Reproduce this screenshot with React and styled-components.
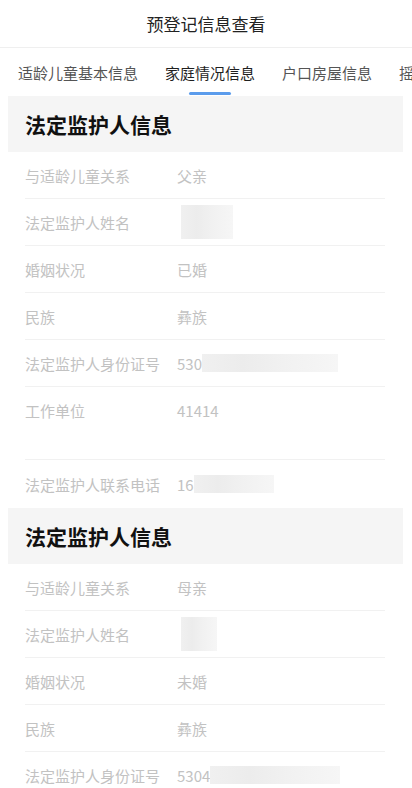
import styled, { createGlobalStyle } from "styled-components"

const GlobalStyle = createGlobalStyle`
  body {
    margin: 0;
    background: #fff;
    font-family: "Noto Sans CJK SC", "Noto Sans", sans-serif;
  }
`

const Page = styled.div`
  width: 412px;
  height: 788px;
  overflow: hidden;
  background: #fff;
`

const TopBar = styled.div`
  display: flex;
  align-items: center;
  justify-content: center;
  height: 47px;
  border-bottom: 1px solid #efefef;
  font-size: 17px;
  color: #222;
`

const Tabs = styled.div`
  display: flex;
  gap: 27px;
  height: 48px;
  padding-left: 18px;
  white-space: nowrap;
  overflow: hidden;
`

const Tab = styled.div`
  position: relative;
  display: flex;
  align-items: center;
  flex-shrink: 0;
  font-size: 15px;
  color: ${(p) => (p.$active ? "#1f1f1f" : "#555")};

  &::after {
    content: "";
    display: ${(p) => (p.$active ? "block" : "none")};
    position: absolute;
    left: 50%;
    bottom: 1px;
    width: 42px;
    height: 3px;
    margin-left: -21px;
    border-radius: 2px;
    background: #5b9cec;
  }
`

const Content = styled.div`
  margin: 0 9px 0 8px;
`

const SectionTitle = styled.div`
  display: flex;
  align-items: center;
  height: 56px;
  padding-left: 17px;
  background: #f5f5f5;
  font-size: 21px;
  font-weight: 700;
  color: #111;
`

const Rows = styled.div`
  padding: 0 18px 0 17px;
`

const Row = styled.div`
  display: flex;
  align-items: ${(p) => (p.$tall ? "flex-start" : "center")};
  height: ${(p) => (p.$tall ? "72px" : "46px")};
  padding-top: ${(p) => (p.$tall ? "13px" : "0")};
  box-sizing: border-box;
  border-bottom: ${(p) => (p.$last ? "none" : "1px solid #f1f1f1")};
  font-size: 15px;
  line-height: 21px;
  color: #c2c2c2;
  height: ${(p) => (p.$tall ? "73px" : p.$last ? "48px" : "47px")};
`

const Label = styled.span`
  width: 152px;
  flex-shrink: 0;
`

const Value = styled.span`
  display: flex;
  align-items: center;
`

const Redact = styled.span`
  display: inline-block;
  width: ${(p) => p.$w}px;
  height: ${(p) => p.$h || 18}px;
  margin-left: ${(p) => p.$ml || 0}px;
  background: linear-gradient(90deg, #f0f0f0 0%, #ececec 30%, #f1f1f1 60%, #f6f6f6 100%);
`

const father = [
  { label: "与适龄儿童关系", value: "父亲" },
  { label: "法定监护人姓名", redact: { w: 52, h: 34, ml: 4 } },
  { label: "婚姻状况", value: "已婚" },
  { label: "民族", value: "彝族" },
  { label: "法定监护人身份证号", value: "530", redact: { w: 136 } },
  { label: "工作单位", value: "41414", tall: true },
  { label: "法定监护人联系电话", value: "16", redact: { w: 80 }, last: true },
]

const mother = [
  { label: "与适龄儿童关系", value: "母亲" },
  { label: "法定监护人姓名", redact: { w: 36, h: 34, ml: 4 } },
  { label: "婚姻状况", value: "未婚" },
  { label: "民族", value: "彝族" },
  { label: "法定监护人身份证号", value: "5304", redact: { w: 130 } },
]

const Section = ({ rows }) => (
  <>
    <SectionTitle>法定监护人信息</SectionTitle>
    <Rows>
      {rows.map((r) => (
        <Row key={r.label} $tall={r.tall} $last={r.last}>
          <Label>{r.label}</Label>
          <Value>
            {r.value}
            {r.redact && <Redact $w={r.redact.w} $h={r.redact.h} $ml={r.redact.ml} />}
          </Value>
        </Row>
      ))}
    </Rows>
  </>
)

export default function App() {
  return (
    <Page>
      <GlobalStyle />
      <TopBar>预登记信息查看</TopBar>
      <Tabs>
        <Tab>适龄儿童基本信息</Tab>
        <Tab $active>家庭情况信息</Tab>
        <Tab>户口房屋信息</Tab>
        <Tab>摇号信息</Tab>
      </Tabs>
      <Content>
        <Section rows={father} />
        <Section rows={mother} />
      </Content>
    </Page>
  )
}
